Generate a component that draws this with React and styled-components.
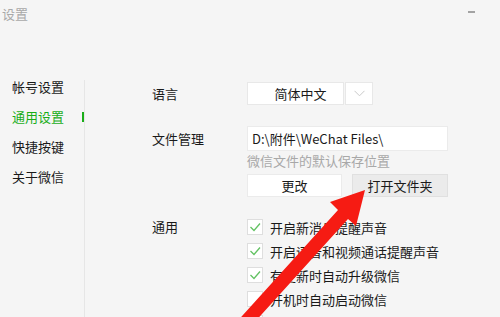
import styled, { createGlobalStyle } from "styled-components";

const GlobalStyle = createGlobalStyle`
  html, body {
    margin: 0;
    padding: 0;
    background: #f5f5f5;
  }
  * {
    box-sizing: border-box;
  }
`;

const Window = styled.div`
  position: relative;
  width: 500px;
  height: 317px;
  overflow: hidden;
  background: #f5f5f5;
  display: flex;
  flex-direction: column;
  font-family: "Noto Sans CJK SC", "Noto Sans", sans-serif;
  font-size: 13px;
  color: #1a1a1a;
`;

const TitleBar = styled.div`
  height: 28px;
  display: flex;
  align-items: center;
  justify-content: space-between;
  padding: 0 25px 0 2px;
  flex-shrink: 0;
`;

const Title = styled.span`
  color: #a9a9a9;
  line-height: 28px;
`;

const Minimize = styled.span`
  width: 7px;
  height: 2px;
  margin-top: -4px;
  background: #a3a3a3;
`;

const Body = styled.div`
  flex: 1;
  display: flex;
  padding-top: 52px;
`;

const Sidebar = styled.nav`
  width: 85px;
  flex-shrink: 0;
  border-right: 1px solid #e6e6e6;
  display: flex;
  flex-direction: column;
  gap: 16px;
`;

const NavItem = styled.div`
  position: relative;
  padding-left: 12px;
  line-height: 14px;
  height: 14px;
  color: ${(p) => (p.active ? "#1aad19" : "#1a1a1a")};

  &::after {
    content: "";
    display: ${(p) => (p.active ? "block" : "none")};
    position: absolute;
    right: 0;
    top: 2px;
    width: 2px;
    height: 10px;
    background: #1aad19;
  }
`;

const Content = styled.div`
  flex: 1;
  padding: 2px 0 0 67px;
  display: flex;
  flex-direction: column;
`;

const Section = styled.div`
  display: flex;
  margin-top: ${(p) => p.gap || 0}px;
`;

const Label = styled.div`
  width: 95px;
  flex-shrink: 0;
  line-height: ${(p) => p.h}px;
`;

const Controls = styled.div`
  display: flex;
  flex-direction: column;
`;

const Select = styled.div`
  display: flex;
  gap: 1px;
  height: 23px;
`;

const SelectValue = styled.div`
  width: 97px;
  padding-left: 10px;
  background: #fff;
  border: 1px solid #e8e8e8;
  display: flex;
  align-items: center;
  justify-content: center;
`;

const SelectArrow = styled.div`
  width: 28px;
  background: #fff;
  border: 1px solid #e8e8e8;
  display: flex;
  align-items: center;
  justify-content: center;
`;

const PathInput = styled.div`
  width: 201px;
  height: 25px;
  background: #fff;
  border: 1px solid #ebebeb;
  padding-left: 4px;
  display: flex;
  align-items: center;
  white-space: nowrap;
`;

const Hint = styled.div`
  margin-top: 1px;
  line-height: 18px;
  color: #a8a8a8;
`;

const ButtonRow = styled.div`
  margin-top: 4px;
  display: flex;
  gap: 10px;
`;

const Button = styled.div`
  width: ${(p) => p.w}px;
  height: 23px;
  display: flex;
  align-items: center;
  justify-content: center;
  background: ${(p) => (p.hover ? "#ebebeb" : "#fff")};
  border: 1px solid ${(p) => (p.hover ? "#e0e0e0" : "#ebebeb")};
`;

const CheckList = styled.div`
  display: flex;
  flex-direction: column;
`;

const CheckRow = styled.div`
  height: 24px;
  display: flex;
  align-items: center;
  gap: 7px;
  white-space: nowrap;
`;

const Box = styled.div`
  width: 16px;
  height: 16px;
  background: #fff;
  border: 1px solid #dedede;
  display: flex;
  align-items: center;
  justify-content: center;
`;

const Overlay = styled.svg`
  position: absolute;
  left: 0;
  top: 0;
  pointer-events: none;
`;

const nav = ["帐号设置", "通用设置", "快捷按键", "关于微信"];

const options = [
  { text: "开启新消息提醒声音", on: true },
  { text: "开启语音和视频通话提醒声音", on: true },
  { text: "有更新时自动升级微信", on: true },
  { text: "开机时自动启动微信", on: false },
  { text: "", on: false },
];

const Check = () => (
  <svg width="14" height="14" viewBox="0 0 14 14">
    <polyline
      points="2.5,7 6,10.5 12,3.5"
      fill="none"
      stroke="#62c262"
      strokeWidth="1.3"
    />
  </svg>
);

export default function App() {
  return (
    <>
      <GlobalStyle />
      <Window>
        <TitleBar>
          <Title>设置</Title>
          <Minimize />
        </TitleBar>
        <Body>
          <Sidebar>
            {nav.map((n, i) => (
              <NavItem key={n} active={i === 1}>
                {n}
              </NavItem>
            ))}
          </Sidebar>
          <Content>
            <Section>
              <Label h={23}>语言</Label>
              <Select>
                <SelectValue>简体中文</SelectValue>
                <SelectArrow>
                  <svg width="11" height="7" viewBox="0 0 11 7">
                    <polyline
                      points="0.5,0.8 5.5,5.8 10.5,0.8"
                      fill="none"
                      stroke="#c9c9c9"
                      strokeWidth="1"
                    />
                  </svg>
                </SelectArrow>
              </Select>
            </Section>
            <Section gap={21}>
              <Label h={25}>文件管理</Label>
              <Controls>
                <PathInput>D:\附件\WeChat Files\</PathInput>
                <Hint>微信文件的默认保存位置</Hint>
                <ButtonRow>
                  <Button w={95}>更改</Button>
                  <Button w={96} hover>
                    打开文件夹
                  </Button>
                </ButtonRow>
              </Controls>
            </Section>
            <Section gap={18}>
              <Label h={24}>通用</Label>
              <CheckList>
                {options.map((o, i) => (
                  <CheckRow key={i}>
                    <Box>{o.on && <Check />}</Box>
                    {o.text}
                  </CheckRow>
                ))}
              </CheckList>
            </Section>
          </Content>
        </Body>
        <Overlay width="500" height="317" viewBox="0 0 500 317">
          <polygon
            points="365,190 330,202 338,210 233,326 243,335 348,219 356,226"
            fill="#f61b13"
          />
        </Overlay>
      </Window>
    </>
  );
}
